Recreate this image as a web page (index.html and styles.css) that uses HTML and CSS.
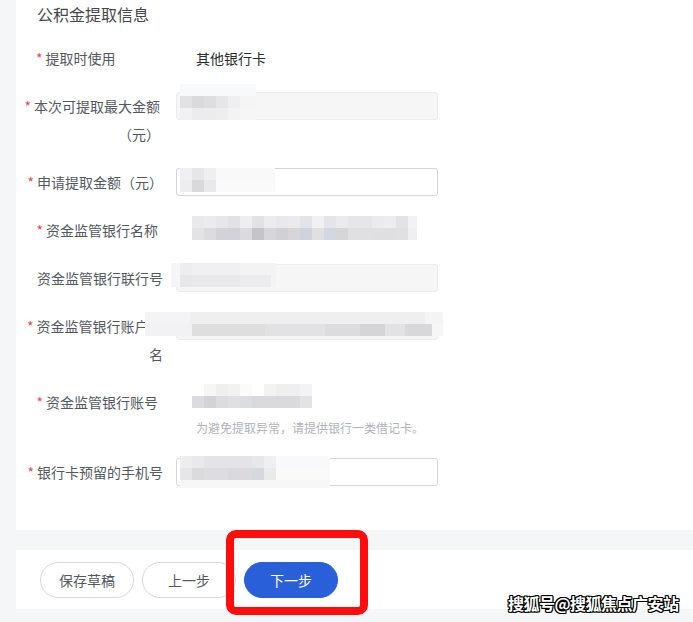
FILE: index.html
```html
<!DOCTYPE html>
<html lang="zh-CN">
<head>
<meta charset="utf-8">
<title>公积金提取信息</title>
<link rel="stylesheet" href="styles.css">
</head>
<body>
<div class="page">
  <section class="panel">
    <h2 class="title">公积金提取信息</h2>
    <div class="form">
      <div class="row">
        <div class="label label--left"><span class="req">*</span>提取时使用</div>
        <div class="field"><span class="value">其他银行卡</span></div>
      </div>
      <div class="row">
        <div class="label label--r3"><span class="req">*</span>本次可提取最大金额<br>（元）</div>
        <div class="field">
          <div class="input input--disabled"></div>
          <div class="mosaic m-max"><i class="r a"></i><i class="r b"></i><i class="r c"></i></div>
        </div>
      </div>
      <div class="row">
        <div class="label"><span class="req">*</span>申请提取金额（元）</div>
        <div class="field">
          <div class="input"></div>
          <div class="mosaic m-apply"><i class="r a"></i><i class="r b"></i></div>
        </div>
      </div>
      <div class="row">
        <div class="label label--r5"><span class="req">*</span>资金监管银行名称</div>
        <div class="field">
          <div class="mosaic m-bank"><i class="r a"></i><i class="r b"></i></div>
        </div>
      </div>
      <div class="row">
        <div class="label">资金监管银行联行号</div>
        <div class="field">
          <div class="input input--disabled"></div>
          <div class="mosaic m-code"><i class="r a"></i><i class="r b"></i></div>
        </div>
      </div>
      <div class="row">
        <div class="label label--wrap"><span class="req">*</span>资金监管银行账户<span class="wrap-end">名</span></div>
        <div class="field">
          <div class="input input--disabled"></div>
          <div class="mosaic m-name"><i class="r a"></i><i class="r b"></i></div>
        </div>
      </div>
      <div class="row row--hint">
        <div class="label label--r5"><span class="req">*</span>资金监管银行账号</div>
        <div class="field">
          <div class="field-line"></div>
          <div class="mosaic m-acct"><i class="r a"></i><i class="r b"></i></div>
          <p class="hint">为避免提取异常，请提供银行一类借记卡。</p>
        </div>
      </div>
      <div class="row row--last">
        <div class="label"><span class="req">*</span>银行卡预留的手机号</div>
        <div class="field">
          <div class="input"></div>
          <div class="mosaic m-phone"><i class="r a"></i><i class="r b"></i><i class="r c"></i></div>
        </div>
      </div>
    </div>
  </section>
  <footer class="footer">
    <button class="btn">保存草稿</button>
    <button class="btn">上一步</button>
    <button class="btn btn--primary">下一步</button>
  </footer>
</div>
<div class="annot"></div>
<div class="watermark">搜狐号@搜狐焦点广安站</div>
</body>
</html>
```

FILE: styles.css
```css
* { box-sizing: border-box; }
html, body { margin: 0; padding: 0; }
body {
  background: #f5f6f8;
  font-family: "Noto Sans CJK SC", "Noto Sans", sans-serif;
  font-size: 14px;
  color: #606266;
  width: 693px;
  height: 622px;
  overflow: hidden;
  position: relative;
}
.page { padding-left: 16px; }
.panel {
  background: #fff;
  padding: 0 0 44px 0;
}
.title {
  margin: 0 0 16px 0;
  padding-left: 21px;
  font-size: 16px;
  line-height: 28px;
  font-weight: normal;
  color: #45474d;
}
.form { display: flex; flex-direction: column; gap: 20px; }
.row { display: flex; align-items: flex-start; }
.row--hint { margin-bottom: -2px; }
.label {
  width: 147px;
  flex: none;
  text-align: right;
  line-height: 28px;
  color: #55585f;
  white-space: nowrap;
}
.label--left { text-align: left; padding-left: 20px; }
.label--wrap { text-align: left; padding-left: 11px; }
.wrap-end { display: block; text-align: right; }
.label--r3 { padding-right: 3px; }
.label--r5 { padding-right: 5px; }
.req { color: #f43e5e; margin-right: 3px; }
.field {
  margin-left: 13px;
  width: 262px;
  position: relative;
  min-height: 28px;
}
.value {
  display: block;
  padding-left: 20px;
  line-height: 28px;
  color: #2b2d31;
}
.field-line { height: 28px; }
.input {
  height: 28px;
  border: 1px solid #d4d6de;
  border-radius: 3px;
  background: #fff;
}
.input--disabled { background: #f6f6f7; border-color: #ebecef; }
.hint {
  margin: 0;
  padding-left: 20px;
  font-size: 12px;
  line-height: 24px;
  color: #b0b3ba;
}
.mosaic { position: absolute; display: flex; flex-direction: column; }
.mosaic .r { display: block; height: 12px; }

.m-max { left: 4px; top: -8px; width: 76px; }
.m-max .a { background: #f8f9fb; }
.m-max .b { background: linear-gradient(90deg, #e2e2e5 0 12px, #dadadc 12px 24px, #dedee0 24px 36px, #e6e6e8 36px 48px, #efeff1 48px 60px, #f5f5f5 60px); }
.m-max .c { background: linear-gradient(90deg, #f1f1f3 0 12px, #ececee 12px 36px, #eeeeef 36px 48px, #f3f3f4 48px 60px, #f6f6f6 60px); }

.m-apply { left: 4px; top: 0; width: 95px; }
.m-apply .a { background: linear-gradient(90deg, #f0f0f2 0 12px, #e6e6e8 12px 24px, #efeff1 24px 36px, #f9f9fa 36px); }
.m-apply .b { background: linear-gradient(90deg, #ededef 0 12px, #d9d9dc 12px 24px, #e9e9eb 24px 36px, #fafafa 36px); }

.m-bank { left: 16px; top: 0; width: 225px; }
.m-bank .a { background: linear-gradient(90deg, #e9e9ec 0 12px, #ebebee 12px 24px, #e6e7ea 24px 36px, #e2e2e6 36px 48px, #eeeef0 48px 60px, #e2e2e5 60px 72px, #ececee 72px 84px, #e8e9ec 84px 96px, #ebebed 96px 108px, #e4e4e8 108px 120px, #f1f1f3 120px 132px, #e4e5e8 132px 144px, #ebebed 144px 156px, #e6e6ea 156px 180px, #ebebee 180px 192px, #ededef 192px 204px, #e3e3e7 204px 216px, #f2f2f4 216px); }
.m-bank .b { background: linear-gradient(90deg, #e3e3e6 0 12px, #dcdce0 12px 24px, #d2d2d8 24px 48px, #dadadf 48px 60px, #c4c4ca 60px 72px, #d6d6db 72px 84px, #d0d0d6 84px 96px, #d6d6da 96px 108px, #d1d3dc 108px 120px, #e0e0e3 120px 132px, #d3d7e0 132px 144px, #d6d6d9 144px 156px, #e0e0e3 156px 180px, #dfdfe2 180px 204px, #e0e0e3 204px 216px, #efeff1 216px); }

.m-code { left: -5px; top: -1px; width: 105px; }
.m-code .a { background: linear-gradient(90deg, #f6f6f7 0 9px, #ededef 9px 21px, #f0f0f2 21px 69px, #f3f3f4 69px); }
.m-code .b { background: linear-gradient(90deg, #f6f6f7 0 9px, #e7e7e9 9px 21px, #e9e9eb 21px 69px, #ececee 69px 100px, #f3f3f4 100px); }

.m-name { left: -31px; top: 0; width: 298px; }
.m-name .a { background: linear-gradient(90deg, #f4f4f6 0 45px, #efefef 45px 280px, #f4f4f4 280px); }
.m-name .b { background: linear-gradient(90deg, #f2f2f4 0 47px, #dededf 47px 120px, #e2e2e4 120px 180px, #dcdcde 180px 215px, #d5d5d8 215px 240px, #e2e2e4 240px 260px, #d8d8da 260px 287px, #f6f6f6 287px); }

.m-acct { left: 16px; top: -4px; width: 120px; }
.m-acct .a { background: linear-gradient(90deg, #fff 0 12px, #f6f6f6 12px 24px, #efefef 24px 36px, #f2f2f2 36px 48px, #fbfbfb 48px 60px, #fff 60px 72px, #f3f3f4 72px 84px, #efeff0 84px 108px, #f3f3f5 108px); }
.m-acct .b { background: linear-gradient(90deg, #dcdce0 0 12px, #d3d3d6 12px 24px, #dcdcdf 24px 36px, #e0e0e3 36px 48px, #dcdde1 48px 60px, #dadadd 60px 108px, #e3e3e6 108px); }

.m-phone { left: 4px; top: -2px; width: 150px; }
.m-phone .a { background: linear-gradient(90deg, #ededf0 0 12px, #e9e9ec 12px 24px, #e4e4e8 24px 72px, #e7e7ea 72px 84px, #efeff1 84px 96px, #f9f9fb 96px); }
.m-phone .b { background: linear-gradient(90deg, #e6e6e9 0 12px, #dbdbde 12px 24px, #dcdce1 24px 48px, #d9d9de 48px 72px, #d6d8e0 72px 84px, #e9eaea 84px 96px, #fafafa 96px); }
.m-phone .c { height: 8px; background: #f7f7f8; }

.footer {
  margin-top: 20px;
  height: 59px;
  background: #fff;
  padding: 12px 24px;
  display: flex;
  gap: 8px;
}
.btn {
  width: 94px;
  height: 36px;
  border: 1px solid #d6d8de;
  border-radius: 18px;
  background: #fff;
  color: #55585f;
  font-family: inherit;
  font-size: 14px;
  padding: 0;
}
.btn--primary { background: #2a5fda; border-color: #2a5fda; color: #fff; }

.annot {
  position: absolute;
  left: 226px;
  top: 530px;
  width: 142px;
  height: 85px;
  border: 8px solid #ff0c0c;
  border-radius: 10px;
}
.watermark {
  position: absolute;
  left: 508px;
  top: 593px;
  font-size: 16px;
  font-weight: bold;
  line-height: 20px;
  color: #fff;
  letter-spacing: -0.5px;
  text-shadow: 1px 0 0 #000, -1px 0 0 #000, 0 1px 0 #000, 0 -1px 0 #000, 1px 1px 0 #000, -1px -1px 0 #000, 1px -1px 0 #000, -1px 1px 0 #000;
}
```
